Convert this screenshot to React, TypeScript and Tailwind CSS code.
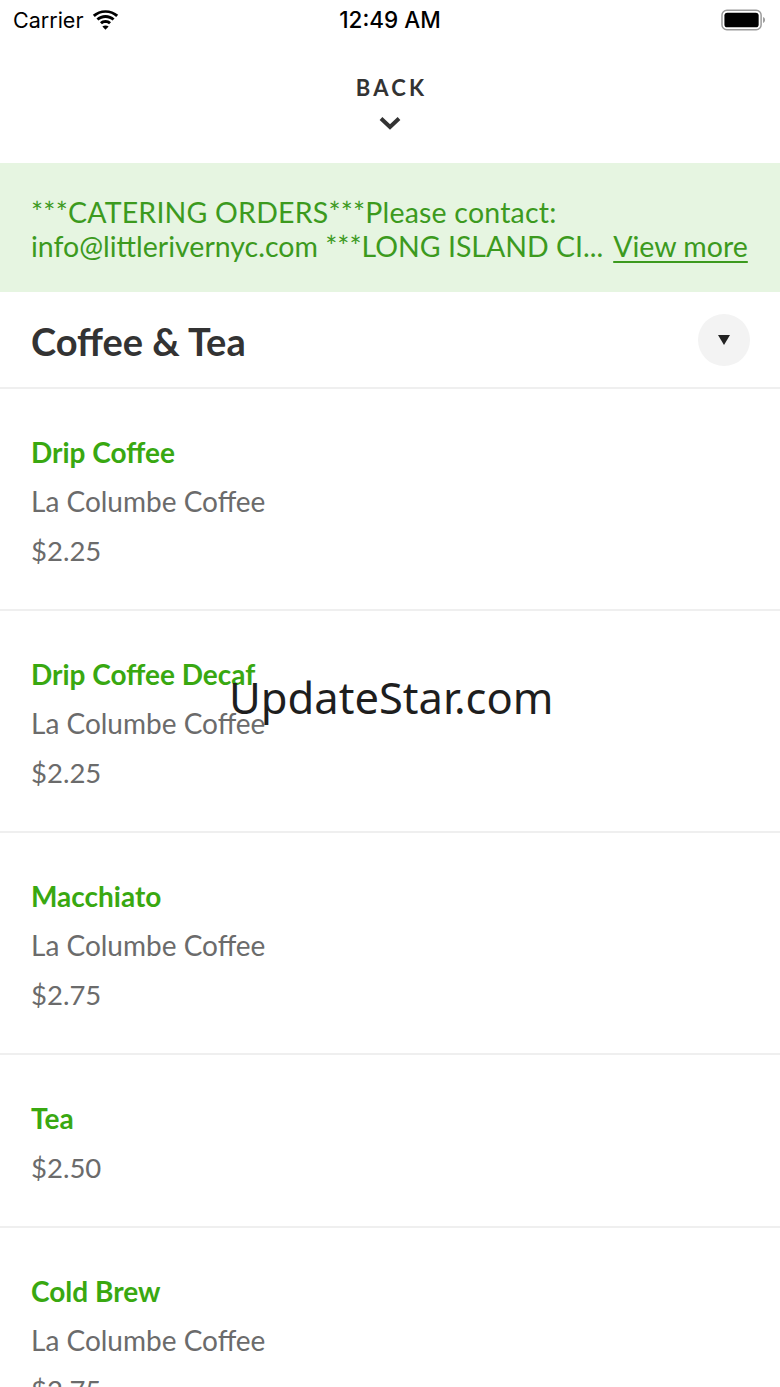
const ITEMS = [
  { name: "Drip Coffee", desc: "La Columbe Coffee", price: "$2.25" },
  { name: "Drip Coffee Decaf", desc: "La Columbe Coffee", price: "$2.25" },
  { name: "Macchiato", desc: "La Columbe Coffee", price: "$2.75" },
  { name: "Tea", desc: "", price: "$2.50" },
  { name: "Cold Brew", desc: "La Columbe Coffee", price: "$2.75" },
];

function StatusBar() {
  return (
    <div className="flex h-[40px] items-center justify-between px-[13px] font-['Inter',sans-serif] text-black">
      <div className="flex w-[150px] items-center gap-[9px]">
        <span className="text-[21.5px]">Carrier</span>
        <svg width="27" height="20" viewBox="0 0 26 19">
          <path d="M13 2.5c4 0 7.6 1.5 10.3 4l1.9-2C22 1.6 17.7 0 13 0S4 1.6.8 4.5l1.9 2C5.4 4 9 2.5 13 2.5z" fill="#000" />
          <path d="M13 7.5c2.6 0 5 1 6.8 2.6l1.9-2C19.4 6 16.3 4.8 13 4.8S6.6 6 4.3 8.1l1.9 2C8 8.5 10.4 7.5 13 7.5z" fill="#000" />
          <path d="M13 12.3c1.3 0 2.5.5 3.4 1.3l1.9-2c-1.4-1.3-3.3-2-5.3-2s-3.9.7-5.3 2l1.9 2c.9-.8 2.1-1.3 3.4-1.3z" fill="#000" />
          <path d="M13 19l3-3.2c-.8-.7-1.8-1.1-3-1.1s-2.2.4-3 1.1z" fill="#000" />
        </svg>
      </div>
      <span className="text-[22.5px] font-medium">12:49 AM</span>
      <div className="flex w-[150px] justify-end pr-[1px]">
        <svg width="45" height="22" viewBox="0 0 46 22">
          <rect x="1" y="1" width="40" height="20" rx="5" fill="none" stroke="#9a9a9a" strokeWidth="1.5" />
          <rect x="3.5" y="3.5" width="35" height="15" rx="3" fill="#000" />
          <path d="M43 8v6c1.3-.4 2-1.6 2-3s-.7-2.6-2-3z" fill="#9a9a9a" />
        </svg>
      </div>
    </div>
  );
}

export default function App() {
  return (
    <div className="relative h-[1387px] w-[780px] overflow-hidden bg-white font-['Lato','Open_Sans',sans-serif]">
      <StatusBar />

      <div className="flex h-[123px] flex-col items-center pt-[33px]">
        <span className="pl-[3px] text-[22px] font-bold leading-[30px] tracking-[3.2px] text-[#333]">BACK</span>
        <svg className="mt-[12px]" width="24" height="16" viewBox="0 0 24 16">
          <path d="M3 3.5l9 8.5 9-8.5" fill="none" stroke="#333" strokeWidth="4" />
        </svg>
      </div>

      <div className="bg-[#e6f5e1] px-[31px] pb-[29px] pt-[32px] text-[28.5px] leading-[34px] text-[#3c9a1e]">
        <div className="whitespace-nowrap tracking-[0.2px]">***CATERING ORDERS***Please contact:</div>
        <div className="flex whitespace-nowrap">
          <span>info@littlerivernyc.com ***LONG ISLAND CI...</span>
          <span className="ml-[10px] underline underline-offset-[4px]">View more</span>
        </div>
      </div>

      <div className="flex h-[97px] items-center justify-between border-b-2 border-[#efefef] pl-[31px] pr-[30px] pt-[3px]">
        <h1 className="text-[38px] font-bold text-[#333]">Coffee &amp; Tea</h1>
        <button type="button" className="-mt-[3px] flex h-[52px] w-[52px] items-center justify-center rounded-full bg-[#f3f3f3]">
          <svg width="12" height="10" viewBox="0 0 12 10">
            <path d="M0 0h12L6 10z" fill="#222" />
          </svg>
        </button>
      </div>

      <div>
        {ITEMS.map((it) => (
          <div key={it.name} className="border-b-2 border-[#efefef] pb-[34px] pl-[31px] pt-[39px] leading-[49px]">
            <div className="text-[28px] font-bold text-[#39a811]">{it.name}</div>
            {it.desc ? <div className="text-[28px] text-[#6b6b6b]">{it.desc}</div> : null}
            <div className="text-[27.5px] text-[#6b6b6b]">{it.price}</div>
          </div>
        ))}
      </div>

      <div className="absolute left-[229px] top-[669px] font-['Noto_Sans',sans-serif] text-[43.5px] leading-[56px] text-[#1e1e1e]">
        UpdateStar.com
      </div>
    </div>
  );
}
